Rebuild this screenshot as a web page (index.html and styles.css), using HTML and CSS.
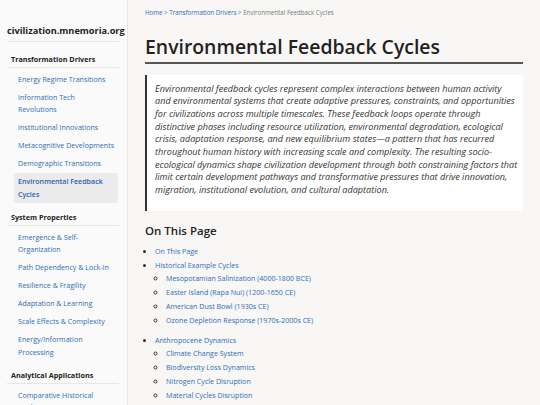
FILE: index.html
```html
<!DOCTYPE html>
<html lang="en">
<head>
<meta charset="utf-8">
<title>Environmental Feedback Cycles</title>
<link rel="stylesheet" href="styles.css">
</head>
<body>
<div class="layout">
  <aside class="sidebar">
    <div class="logo">civilization.mnemoria.org</div>
    <nav>
      <div class="nav-section first">Transformation Drivers</div>
      <ul class="nav-list">
        <li><a href="#">Energy Regime Transitions</a></li>
        <li><a href="#">Information Tech Revolutions</a></li>
        <li><a href="#">Institutional Innovations</a></li>
        <li><a href="#">Metacognitive Developments</a></li>
        <li><a href="#">Demographic Transitions</a></li>
        <li class="active"><a href="#">Environmental Feedback Cycles</a></li>
      </ul>
      <div class="nav-section">System Properties</div>
      <ul class="nav-list">
        <li><a href="#">Emergence &amp; Self-Organization</a></li>
        <li><a href="#">Path Dependency &amp; Lock-In</a></li>
        <li><a href="#">Resilience &amp; Fragility</a></li>
        <li><a href="#">Adaptation &amp; Learning</a></li>
        <li><a href="#">Scale Effects &amp; Complexity</a></li>
        <li><a href="#">Energy/Information Processing</a></li>
      </ul>
      <div class="nav-section">Analytical Applications</div>
      <ul class="nav-list">
        <li><a href="#">Comparative Historical Analysis</a></li>
      </ul>
    </nav>
  </aside>
  <main class="main">
    <div class="breadcrumb"><a href="#">Home</a> &gt; <a href="#">Transformation Drivers</a> &gt; Environmental Feedback Cycles</div>
    <h1>Environmental Feedback Cycles</h1>
    <blockquote class="intro">Environmental feedback cycles represent complex interactions between human activity and environmental systems that create adaptive pressures, constraints, and opportunities for civilizations across multiple timescales. These feedback loops operate through distinctive phases including resource utilization, environmental degradation, ecological crisis, adaptation response, and new equilibrium states—a pattern that has recurred throughout human history with increasing scale and complexity. The resulting socio-ecological dynamics shape civilization development through both constraining factors that limit certain development pathways and transformative pressures that drive innovation, migration, institutional evolution, and cultural adaptation.</blockquote>
    <h2>On This Page</h2>
    <ul class="toc">
      <li><a href="#">On This Page</a></li>
      <li><a href="#">Historical Example Cycles</a>
        <ul>
          <li><a href="#">Mesopotamian Salinization (4000-1800 BCE)</a></li>
          <li><a href="#">Easter Island (Rapa Nui) (1200-1650 CE)</a></li>
          <li><a href="#">American Dust Bowl (1930s CE)</a></li>
          <li><a href="#">Ozone Depletion Response (1970s-2000s CE)</a></li>
        </ul>
      </li>
      <li><a href="#">Anthropocene Dynamics</a>
        <ul>
          <li><a href="#">Climate Change System</a></li>
          <li><a href="#">Biodiversity Loss Dynamics</a></li>
          <li><a href="#">Nitrogen Cycle Disruption</a></li>
          <li><a href="#">Material Cycles Disruption</a></li>
        </ul>
      </li>
    </ul>
  </main>
</div>
</body>
</html>
```
FILE: styles.css
```css
* { box-sizing: border-box; }
html, body { margin: 0; padding: 0; }
body {
  font-family: "Open Sans", "Noto Sans", sans-serif;
  color: #333;
  background: #f8f7f6;
  height: 405px;
  overflow: hidden;
}
a { color: #2e6db4; text-decoration: none; }
.layout { display: flex; height: 405px; }
.sidebar {
  width: 128px;
  flex: none;
  background: #fafafa;
  border-right: 1px solid #e8e8e8;
  padding: 25px 8px 0 7px;
}
.logo {
  font-family: "Open Sans", sans-serif;
  font-weight: 700;
  font-size: 9.2px;
  line-height: 12.5px;
  color: #222;
  white-space: nowrap;
  padding-bottom: 3.5px;
  border-bottom: 1px solid #e6e6e6;
}
.nav-section {
  font-weight: 700;
  font-size: 7.2px;
  line-height: 10px;
  color: #222;
  padding: 9px 4px 3px;
  border-bottom: 1px solid #e6e6e6;
  margin-bottom: 2px;
}
.nav-section.first { padding-top: 12px; }
.nav-list { list-style: none; margin: 0; padding: 0 1px 0 7px; }
.nav-list li {
  font-size: 7.1px;
  line-height: 12.5px;
  padding: 2.75px 3px 2.75px 4px;
  border-radius: 2px;
}
.nav-list li.active { background: #ebebeb; font-weight: 600; }
.nav-list li.active a { color: #2a62a8; }
.main {
  flex: 1;
  padding: 9px 17px 0 17px;
}
.breadcrumb {
  font-size: 6.2px;
  line-height: 8.5px;
  color: #777;
}
h1 {
  font-family: "Open Sans", sans-serif;
  font-weight: 600;
  font-size: 19.4px;
  color: #222;
  margin: 17.5px 0 0;
  padding-bottom: 3px;
  border-bottom: 2px solid #555;
  line-height: 24px;
}
.intro {
  margin: 11px 0 0;
  background: #fff;
  border-left: 2px solid #333;
  padding: 7.5px 4px 14px 8px;
  font-style: italic;
  font-size: 9.1px;
  line-height: 12.7px;
  color: #333;
}
h2 {
  font-family: "Open Sans", sans-serif;
  font-weight: 600;
  font-size: 11.5px;
  color: #222;
  margin: 12px 0 7px;
  line-height: 16px;
}
.toc {
  margin: 0;
  padding-left: 10px;
  font-size: 7.1px;
  line-height: 10px;
}
.toc > li { margin-bottom: 4px; }
.toc ul {
  list-style: circle;
  padding-left: 11px;
  margin: 2.7px 0 10.7px;
}
.toc ul li { margin-bottom: 4px; }
```
